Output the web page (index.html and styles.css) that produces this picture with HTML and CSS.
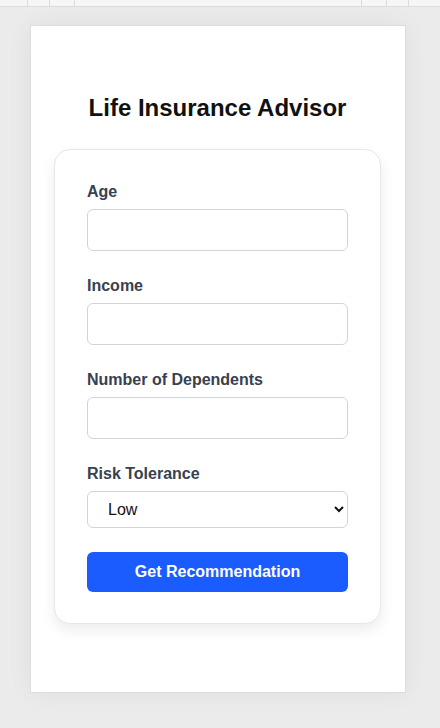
FILE: index.html
```html
<!DOCTYPE html>
<html lang="en">
<head>
<meta charset="utf-8">
<title>Life Insurance Advisor</title>
<link rel="stylesheet" href="styles.css">
</head>
<body>
<div class="toolbar">
  <div class="tb-cell tb-a"></div>
  <div class="tb-cell tb-b"></div>
  <div class="tb-cell tb-c"></div>
  <div class="tb-cell tb-mid"></div>
  <div class="tb-cell tb-d"></div>
  <div class="tb-cell tb-e"></div>
  <div class="tb-cell tb-f"></div>
</div>
<div class="stage">
  <div class="device">
    <h1 class="title">Life Insurance Advisor</h1>
    <form class="card">
      <div class="field">
        <label class="label" for="age">Age</label>
        <input class="input" id="age" type="number">
      </div>
      <div class="field">
        <label class="label" for="income">Income</label>
        <input class="input" id="income" type="number">
      </div>
      <div class="field">
        <label class="label" for="deps">Number of Dependents</label>
        <input class="input" id="deps" type="number">
      </div>
      <div class="field field-last">
        <label class="label" for="risk">Risk Tolerance</label>
        <select class="select" id="risk">
          <option>Low</option>
          <option>Medium</option>
          <option>High</option>
        </select>
      </div>
      <button class="button" type="button">Get Recommendation</button>
    </form>
  </div>
</div>
</body>
</html>
```

FILE: styles.css
```css
* { box-sizing: border-box; }
html, body { margin: 0; padding: 0; }
body {
  background: #ebebeb;
  font-family: "Liberation Sans", Arial, sans-serif;
  height: 728px;
  overflow: hidden;
}
.toolbar {
  display: flex;
  height: 7px;
  background: #f6f6f6;
  border-bottom: 1px solid #dcdcdc;
}
.tb-cell { height: 100%; border-right: 1px solid #dcdcdc; }
.tb-a { width: 28px; }
.tb-b { width: 22px; }
.tb-c { width: 25px; }
.tb-mid { width: 287px; }
.tb-d { width: 25px; }
.tb-e { width: 22px; }
.tb-f { flex: 1; border-right: none; }
.stage {
  padding: 18px 0 0 30px;
}
.device {
  width: 376px;
  height: 668px;
  background: #ffffff;
  border: 1px solid #dddddd;
  box-shadow: 0 0 24px rgba(0,0,0,0.06);
  padding: 68px 24px 0 23px;
}
.title {
  margin: 0 0 27px;
  font-size: 24px;
  line-height: 28px;
  font-weight: 700;
  color: #111111;
  text-align: center;
}
.card {
  display: flex;
  flex-direction: column;
  background: #ffffff;
  border: 1px solid #e5e7eb;
  border-radius: 16px;
  box-shadow: 0 6px 14px rgba(0,0,0,0.08);
  padding: 32px 32px 31px 32px;
}
.field {
  display: flex;
  flex-direction: column;
  gap: 7px;
  margin-bottom: 25px;
}
.field-last { margin-bottom: 24px; }
.label {
  font-size: 16px;
  line-height: 20px;
  font-weight: 700;
  color: #374151;
}
.input {
  height: 42px;
  border: 1px solid #d1d5db;
  border-radius: 6px;
  padding: 0 12px;
  font-size: 16px;
  font-family: inherit;
  background: #fff;
}
.select {
  height: 37px;
  border: 1px solid #d1d5db;
  border-radius: 6px;
  padding: 0 16px;
  font-size: 16px;
  font-family: inherit;
  color: #111;
  background: #fff;
}
.button {
  height: 40px;
  border: none;
  border-radius: 6px;
  background: #1a5cff;
  color: #ffffff;
  font-family: inherit;
  font-size: 16px;
  font-weight: 700;
}
```
